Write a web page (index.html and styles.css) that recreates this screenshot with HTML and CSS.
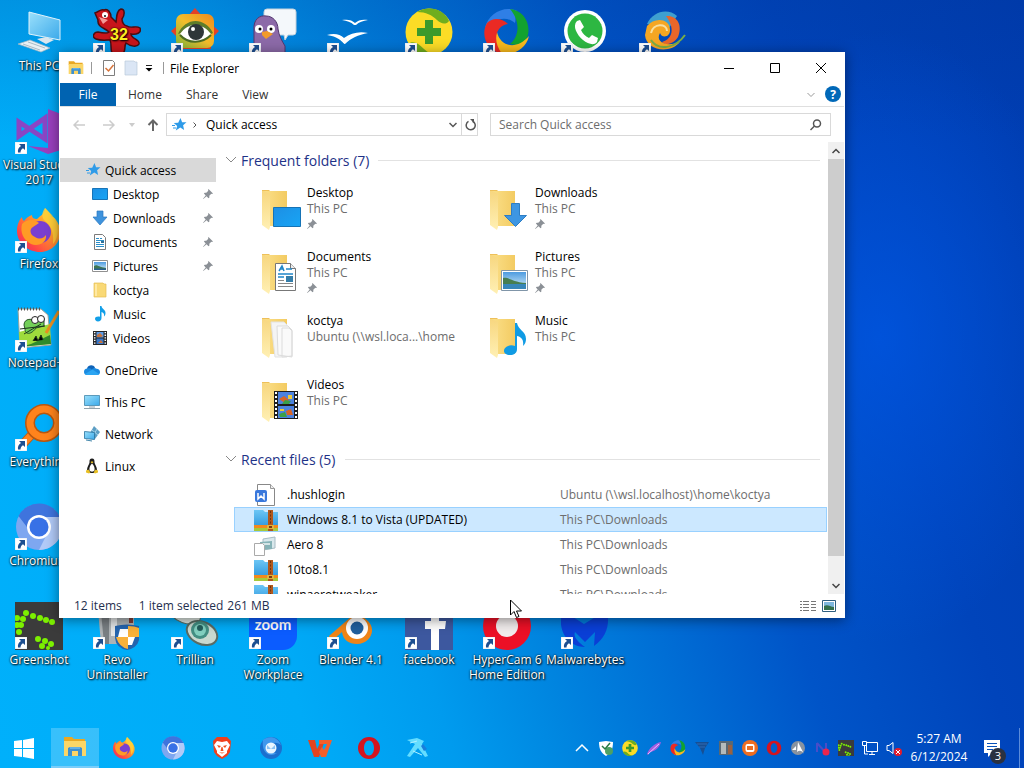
FILE: index.html
```
<!DOCTYPE html>
<html lang="en">
<head>
  <meta charset="UTF-8" />
  <meta name="viewport" content="width=device-width, initial-scale=1.0" />
  <title>File Explorer</title>
  <link rel="stylesheet" href="styles.css">
</head>
<body>
  <!-- shared icons -->
  <svg class="sprite" aria-hidden="true">
    <defs>
      <linearGradient id="g-folder" x1="0" x2="1"><stop offset="0" stop-color="#fbe08a"/><stop offset="1" stop-color="#f3cb62"/></linearGradient>
      <linearGradient id="g-flap" x1="0" x2="0" y1="0" y2="1"><stop offset="0" stop-color="#f7d67e"/><stop offset="1" stop-color="#fff0b4"/></linearGradient>
      <linearGradient id="g-screen" x1="0" x2="1" y1="0" y2="1"><stop offset="0" stop-color="#9be0fb"/><stop offset="1" stop-color="#3ba9ea"/></linearGradient>
      <linearGradient id="g-desk" x1="0" x2="1" y1="0" y2="1"><stop offset="0" stop-color="#1d8fe4"/><stop offset="1" stop-color="#18a5f5"/></linearGradient>
      <linearGradient id="g-fox" x1="1" x2="0" y1="0" y2="1"><stop offset="0" stop-color="#fff04a"/><stop offset=".4" stop-color="#ff9a2a"/><stop offset=".75" stop-color="#ff4545"/><stop offset="1" stop-color="#e3207a"/></linearGradient>
      <linearGradient id="g-sky" x1="0" x2="0" y1="0" y2="1"><stop offset="0" stop-color="#4d9be0"/><stop offset="1" stop-color="#d9f0fa"/></linearGradient>
      <linearGradient id="g-zip" x1="0" x2="0" y1="0" y2="1"><stop offset="0" stop-color="#6cc6f5"/><stop offset="1" stop-color="#2c95dc"/></linearGradient>
      <linearGradient id="g-eye" x1="0" x2="1" y1="1" y2="0"><stop offset="0" stop-color="#79b53a"/><stop offset=".5" stop-color="#f3bd2b"/><stop offset="1" stop-color="#ef8a1d"/></linearGradient>
    </defs>
    <symbol id="arrow" viewBox="0 0 12 12">
      <path fill="#fff" stroke="#c8d4e0" stroke-width=".5" d="M0 0h12v12H0z"/>
      <path fill="#1d4f91" d="M4 2h6v6L8 6.200C6.500 7 5.500 8.500 5.500 10.500H3C2.500 7.500 3.500 5.500 6 4z"/>
    </symbol>
    <symbol id="star" viewBox="0 0 16 16">
      <path fill="#2f9be8" d="M9.500 1l1.600 4.200 4.400.1-3.400 2.900 1 4.800-3.800-2.500-4.500 3 1.400-4.600L2.800 6l4.400-.3z"/>
      <path stroke="#2f9be8" d="M1 8.500h3M2 11h3"/>
    </symbol>
    <symbol id="desktop" viewBox="0 0 16 16"><path fill="url(#g-desk)" stroke="#1874b8" d="M.5 2.500h15v11H.5z"/></symbol>
    <symbol id="download" viewBox="0 0 16 16"><path fill="#3e93dd" stroke="#2b78c0" stroke-width=".7" d="M5 1h6v6h4l-7 8-7-8h4z"/></symbol>
    <symbol id="document" viewBox="0 0 16 16">
      <path fill="#fff" stroke="#7b7b7b" d="M2.500.5h8l3 3v12h-11z"/>
      <path stroke="#2c8fc9" d="M4 4.500h3M8 4.500h2M4 6.500h8M4 8.500h4M4 10.500h8M4 12.500h8"/>
      <path fill="#2f6f96" d="M9 7h3v2H9z"/>
    </symbol>
    <symbol id="picture" viewBox="0 0 16 16">
      <path fill="#fff" stroke="#909090" d="M.5 2.500h15v11H.5z"/>
      <path fill="url(#g-sky)" d="M2 4h12v8H2z"/>
      <path fill="#3f7652" d="M2 8c3-2 4 1 12 2v1H2z"/><path fill="#285f8c" d="M2 10.500h12V12H2z"/>
    </symbol>
    <symbol id="folder" viewBox="0 0 16 16"><path fill="#f9d976" stroke="#e5bd55" stroke-width=".7" d="M2 1h9l1 1h2v13H2z"/><path fill="#ffe9a3" d="M3 2h2v12H3z"/></symbol>
    <symbol id="music" viewBox="0 0 16 16"><path fill="#129fe8" d="M8 0h1.500c0 3 4 3.500 4 7 0 1.500-.5 2.500-1.500 3.500.5-3-1-4-2.500-4.500v6c0 2-1.500 3.500-3.500 3.500S3 14 3 12.800C3 11 5.500 10 8 10.800z"/></symbol>
    <symbol id="video" viewBox="0 0 16 16">
      <path fill="#262626" d="M1 1h14v14H1z"/>
      <path fill="#5b9be6" d="M4.500 2h7v5.500h-7z"/><path fill="#3575c8" d="M4.500 8.500h7V14h-7z"/>
      <path fill="#c8743c" d="M5 5l3-2 3 3-2 1H5zM6 13l3-3 2 3z"/>
      <path stroke="#fff" stroke-width="1.500" stroke-dasharray="1.300 1.300" d="M2.700 2v12.500M13.300 2v12.500"/>
    </symbol>
    <symbol id="cloud" viewBox="0 0 16 16">
      <path fill="#0f63b8" d="M3 6.500C4 3 9 2 11 5.500l-4 5z"/>
      <path fill="#1b8ae0" d="M3.500 6.500C1 6.500 0 8 0 10c0 2 1.300 3 3 3h10c2 0 3-1.200 3-3s-1.300-3.300-3.500-3.300c-2-1.500-4 0-4.500 1C7 6.500 5 6 3.500 6.500z"/>
      <path fill="#2ba5f2" d="M1 12l7.500-4.500L15 12c-.5.700-1 1-2 1H3c-.9 0-1.500-.4-2-1z"/>
    </symbol>
    <symbol id="pc" viewBox="0 0 16 16"><path fill="url(#g-screen)" stroke="#4286ab" stroke-width=".8" d="M.5 1.500h15v10H.5z"/><path stroke="#768b98" d="M0 14.500h16M5 13h6" stroke-width=".8"/></symbol>
    <symbol id="network" viewBox="0 0 16 16">
      <path fill="#5c9ec4" d="M10 0l6 6-5 7-5-6z"/><path d="M8 4l6 5M13 3l-4 7" stroke="#a6d4ea"/>
      <path fill="url(#g-screen)" stroke="#27719d" stroke-width=".8" d="M.5 5.500l10 1v7l-10-1z"/><path stroke="#4286ab" d="M2 14l6 1"/>
    </symbol>
    <symbol id="tux" viewBox="0 0 16 16">
      <path fill="#1c1c1c" d="M8 .5c-2 0-2.700 1.500-2.500 4C5.300 6.500 3 8.500 3 12l3 3h4l3-3c0-3.500-2.300-5.500-2.500-7.500C10.700 2 10 .5 8 .5z"/>
      <path fill="#fff" d="M8 5.500C6 7 5 10 5.500 12.500c1 1.500 4 1.500 5 0C11 10 10 7 8 5.500z"/>
      <path fill="#e8bf24" d="M6.500 4L8 3.300 9.500 4 8 5.500zM2 12.500l2.500-1 2 3-1.500 1-3-1zM14 12.500l-2.500-1-2 3 1.500 1 3-1z"/>
    </symbol>
    <symbol id="pin" viewBox="0 0 10 10"><path fill="#8b9096" d="M5.500 0L10 4.500l-1 .5-.7-.2-2 2 .1 1.700-.9.700L3.600 7.300.3 9.900 0 9.700l2.700-3.300L.9 4.500l.8-.8 1.600.1 2-2L5 1z"/></symbol>
    <!-- open folder used by the large tiles -->
    <symbol id="bigfolder" viewBox="0 0 48 48">
      <path fill="url(#g-folder)" d="M8 6h24v35H12z"/>
      <path fill="url(#g-flap)" d="M7 5l8 4v33l-1 3-7-5z"/>
      <path fill="#eec05a" d="M7 5h8l-1 1H7z"/>
    </symbol>
    <symbol id="zip" viewBox="0 0 24 24">
      <path fill="url(#g-zip)" d="M0 2h9l2 2h13v16H0z"/>
      <path fill="#f28a1c" d="M0 17h24v3H0z"/><path fill="#a7c93a" d="M0 20h24v3H0z"/>
      <path fill="#b0571c" d="M14 2h5v21h-5z"/><path stroke="#6d3410" stroke-dasharray="2 1.500" d="M16.500 3v14"/>
      <path fill="#e0b43c" d="M13 17h7v4h-7z"/><path fill="#7a3a12" d="M15 18h3v2h-3z"/>
    </symbol>
    <symbol id="explorer" viewBox="0 0 24 24">
      <path fill="#e9a823" d="M1 2h8l2 2h11v3H1z"/><path fill="#fbd667" d="M1 6h22v15H1z"/>
      <path fill="#3d8fd0" d="M5 13l2-1h10l2 1v8h-4v-5H9v5H5z"/><path fill="#63b0e6" d="M7 12h10v2H7z"/>
    </symbol>
    <symbol id="firefox" viewBox="0 0 48 48">
      <path fill="url(#g-fox)" d="M30 2c3 3 5 5 7 9 2-1 7 6 8 12 2 13-8 23-20 23S2 37 2 25c0-6 2-11 5-14 0 2 1 3 2 4 2-3 5-5 8-6 0 3 2 4 5 4 3-3 8-5 8-11z"/>
      <circle cx="25" cy="26" r="11" fill="#7a3fd0"/>
      <path fill="#ff9b25" d="M7 18c5-5 12-5 17-1l-6 4c-4 2-3 8 2 10 5 3 9 1 11-2 1 8-8 12-15 9-8-4-11-12-9-20z"/>
      <path fill="#ffd23a" d="M30 2c3 4 8 6 11 14 3 8 2 16-3 22 1-10-1-18-8-23-4-4-3-9 0-13z" opacity=".8"/>
    </symbol>
    <symbol id="chromium" viewBox="0 0 48 48">
      <circle cx="24" cy="24" r="23" fill="#7ea7f0"/>
      <path fill="#3f74dd" d="M3.500 13A23 23 0 0 1 45 14H24a10 10 0 0 0-9 14z"/>
      <path fill="#b1caf8" d="M45 14A23 23 0 0 1 24 47l9-18a10 10 0 0 0-3-15z"/>
      <circle cx="24" cy="24" r="12" fill="#fff"/><circle cx="24" cy="24" r="9.500" fill="#3871e6"/>
    </symbol>
    <symbol id="swirl" viewBox="0 0 48 48">
      <path fill="#2f7fe6" d="M2 20C5 6 21-3 34 3c-2 3-1 9-2 12C24 8 12 10 2 20z"/>
      <path fill="#12a22f" d="M27 1c14 1 22 16 17 29-3 6-10 8-17 6 9-7 11-22 0-35z"/>
      <path fill="#f8b91c" d="M46 28c-3 14-19 22-32 16-4-3-5-12 0-20 3 14 19 19 32 4z"/>
      <path fill="#ea2a24" d="M19 46C4 43-3 27 4 15c6-6 15-5 21 1-11 1-17 15-6 30z"/>
    </symbol>
    <symbol id="opera" viewBox="0 0 24 24"><path fill="#d4141f" fill-rule="evenodd" d="M12 1a11 11 0 1 0 0 22 11 11 0 0 0 0-22zm0 3.500c3 0 5 3.300 5 7.500s-2 7.500-5 7.500S7 16.200 7 12s2-7.500 5-7.500z"/></symbol>
    <symbol id="plus360" viewBox="0 0 48 48">
      <circle cx="24" cy="24" r="23.500" fill="#fbdc26"/>
      <path fill="#6fae1e" d="M12 4c12-7 27-3 32 9-3 4-8 3-12-1-5-5-11-8-20-8zM3 36c5-4 10-1 16 5 4 4 8 5 12 5-10 5-23 1-28-10z"/>
      <path fill="#3b9a2b" d="M20 12h8v8h8v8h-8v8h-8v-8h-8v-8h8z"/>
    </symbol>
    <symbol id="greenshot" viewBox="0 0 48 48">
      <path fill="#3b3b3b" d="M0 0h48v48H0z"/>
      <g fill="#7cf000"><circle cx="11" cy="11" r="3"/><circle cx="18" cy="14" r="3"/><circle cx="25" cy="16" r="3"/><circle cx="31" cy="18" r="3"/><circle cx="37" cy="20" r="3"/><circle cx="8" cy="17" r="3"/><circle cx="6" cy="23" r="3"/><circle cx="4" cy="30" r="3"/><circle cx="2" cy="16" r="3"/><circle cx="2" cy="23" r="3"/><circle cx="23" cy="37" r="3"/><circle cx="30" cy="39" r="3"/><circle cx="36" cy="42" r="3"/><circle cx="27" cy="44" r="3"/><circle cx="33" cy="46" r="2"/></g>
    </symbol>
  </svg>

  <main class="desktop">
    <a class="shortcut" href="#"><svg class="shortcut-icon" viewBox="0 0 48 48">
      <path fill="url(#g-screen)" stroke="#dff2fb" d="M14 4l31 8v20l-31-6z"/><path fill="#d9e6ee" d="M22 31l9-2 8 3-8 4z"/>
      <path fill="#e8f0f4" stroke="#9db4c1" stroke-width=".7" d="M3 36l12-4 20 8-9 4z"/><path stroke="#a9bcc7" d="M8 36l17 6M13 34l17 6"/></svg>This PC</a>
    <a class="shortcut" href="#" aria-label="IrfanView"><svg class="shortcut-icon" viewBox="0 0 48 48">
      <path fill="#c8151b" stroke="#4a0d10" stroke-width="1.500" d="M2 5c4-1 5-4 9-3 4-2 7 3 7 7l5 5c1-5 0-11 5-13 4 0 4 6 1 10 0 3 2 7 5 7 4 3 9-1 13 2 2 5-4 7-9 6 0 5 9 5 8 10-2 4-9 2-13-1-2 3 0 8-3 10H19c-2-5 0-9-2-13-4 0-9 1-14-1-5-2-2-7 2-7 4 1 9 2 11 0-4-4-12-5-11-12z"/>
      <circle cx="12" cy="7" r="3" fill="#fff"/><circle cx="12" cy="8" r="1" fill="#111"/><path fill="#f39a96" d="M6 9l9 3-5 4z"/>
      <text class="cat-number" x="26" y="32" text-anchor="middle">32</text></svg><svg class="badge"><use href="#arrow"/></svg></a>
    <a class="shortcut" href="#" aria-label="FastStone"><svg class="shortcut-icon" viewBox="0 0 48 48">
      <path fill="#e34228" d="M24 0l8 9h8v7l8 7-8 8v10H8V31l-8-8 8-7V8h9z"/><rect x="5" y="6" width="38" height="34" rx="7" fill="url(#g-eye)"/>
      <path fill="#5e7d2a" d="M7 26C14 10 33 8 42 25l-4 2c-9-10-20-12-28-2z"/><path fill="#fff" d="M9 26c8-12 22-12 31 0-8 9-22 10-31 0z"/>
      <circle cx="25" cy="24" r="8" fill="#2e3638"/><circle cx="22" cy="21" r="2" fill="#fff"/><path fill="none" stroke="#4b6b24" stroke-width="2" d="M9 27c8 9 22 9 31 0"/></svg><svg class="badge"><use href="#arrow"/></svg></a>
    <a class="shortcut" href="#" aria-label="Pidgin"><svg class="shortcut-icon" viewBox="0 0 48 48">
      <path fill="#f4f8fb" stroke="#c4d2dc" d="M18 1h26q3 0 3 3v20q0 3-3 3h-5l-3 5-1-5H18q-3 0-3-3V4q0-3 3-3z"/>
      <path fill="#8c6aa8" stroke="#54376f" d="M5 46V22C4 11 11 7 17 8c7 0 12 6 12 13 1 7 4 12 7 17v8z"/>
      <circle cx="10" cy="21" r="4" fill="#fff"/><circle cx="22" cy="21" r="4" fill="#fff"/><circle cx="11" cy="21" r="1.500"/><circle cx="22" cy="21" r="1.500"/>
      <path fill="#f19a2a" d="M13 24l5-1 6 3-7 5-4-4z"/></svg><svg class="badge"><use href="#arrow"/></svg></a>
    <a class="shortcut" href="#" aria-label="OpenOffice"><svg class="shortcut-icon" viewBox="0 0 48 48">
      <path fill="#fff" d="M15 12c6-1 10 0 13 3 3-3 8-4 13-3-5 1-9 2-12 5h-2c-3-3-7-4-12-5zM0 27c7-2 13-1 17 3 7-5 15-7 24-5-10 2-17 5-23 11-2 0-4-7-18-9z"/></svg><svg class="badge"><use href="#arrow"/></svg></a>
    <a class="shortcut" href="#" aria-label="360 Security"><svg class="shortcut-icon"><use href="#plus360"/></svg><svg class="badge"><use href="#arrow"/></svg></a>
    <a class="shortcut" href="#" aria-label="PDF Tools"><svg class="shortcut-icon"><use href="#swirl"/></svg><svg class="badge"><use href="#arrow"/></svg></a>
    <a class="shortcut" href="#" aria-label="WhatsApp"><svg class="shortcut-icon" viewBox="0 0 48 48">
      <circle cx="24" cy="23" r="21" fill="#fff"/><circle cx="24" cy="23" r="17.500" fill="#2db742"/>
      <path fill="#fff" d="M16 13l3-1 4 7-3 3c2 4 4 6 8 8l3-3 6 3-1 4c-3 4-9 2-14-2-6-5-11-14-6-19z"/></svg><svg class="badge"><use href="#arrow"/></svg></a>
    <a class="shortcut" href="#" aria-label="Paint"><svg class="shortcut-icon" viewBox="0 0 48 48">
      <path fill="#3e9fd0" d="M8 16C14 3 29 0 38 8l-8 12z"/><path fill="#e8662a" d="M27 8c11-1 17 9 12 21-4 7-13 9-16 5 11-3 13-14 4-26z"/><path fill="#f5a623" d="M8 18c7-9 22-8 23 3 1 8-8 10-10 4-5 8 5 15 20 9C30 47 7 42 6 27z"/><path fill="none" stroke="#79ad45" stroke-width="2" d="M12 32c7 11 24 9 34-5"/><path fill="none" stroke="#f8df9f" stroke-width="2" d="M12 25c2-10 16-10 16-2"/></svg><svg class="badge"><use href="#arrow"/></svg></a>

    <a class="shortcut first" href="#"><svg class="shortcut-icon" viewBox="0 0 48 48">
      <path fill="none" stroke="#8a45c4" stroke-width="5" d="M4 15v14l26-18v21L4 15z"/><path fill="#9a3fbe" d="M33 2l13 5v36l-13 4L13 39l20 2z"/></svg><svg class="badge"><use href="#arrow"/></svg>Visual Studio 2017</a>
    <a class="shortcut first" href="#"><svg class="shortcut-icon"><use href="#firefox"/></svg><svg class="badge"><use href="#arrow"/></svg>Firefox</a>
    <a class="shortcut first" href="#"><svg class="shortcut-icon" viewBox="0 0 48 48">
      <path fill="#fff" stroke="#9aa39a" d="M3 4h23l7 6 3 30-31 3z"/><path fill="#9edb3c" d="M4 27l31-8 1 20-31 3z"/><path fill="#2f8b2c" d="M16 39l19-9 1 9-31 3z"/>
      <path stroke="#555" stroke-dasharray="1 2" stroke-width="3" d="M3 4h23"/><path fill="#72cf58" stroke="#28542a" d="M9 20c0-7 9-7 12-3l8-3v7l-8 2c-5 7-11 7-11 1z"/>
      <circle cx="20" cy="15" r="3.500" fill="#fff" stroke="#222"/><circle cx="26" cy="14" r="3.500" fill="#fff" stroke="#222"/><path stroke="#1c331c" d="M5 24l25-3M9 29l17-10M18 36l3-5 2 5 3-6 2 5"/><path stroke="#e89020" stroke-width="3" d="M31 28L44 6"/></svg><svg class="badge"><use href="#arrow"/></svg>Notepad++</a>
    <a class="shortcut first" href="#"><svg class="shortcut-icon" viewBox="0 0 48 48">
      <path stroke="#be5b12" stroke-width="9" d="M8 40l13-14"/><path stroke="#ff831c" stroke-width="7" d="M8 40l13-14"/><circle cx="29" cy="19" r="14" fill="none" stroke="#b85710" stroke-width="10"/><circle cx="29" cy="19" r="14" fill="none" stroke="#ff831c" stroke-width="7"/></svg><svg class="badge"><use href="#arrow"/></svg>Everything</a>
    <a class="shortcut first" href="#"><svg class="shortcut-icon"><use href="#chromium"/></svg><svg class="badge"><use href="#arrow"/></svg>Chromium</a>
    <a class="shortcut first" href="#"><svg class="shortcut-icon"><use href="#greenshot"/></svg><svg class="badge"><use href="#arrow"/></svg>Greenshot</a>
    <a class="shortcut" href="#"><svg class="shortcut-icon" viewBox="0 0 48 48">
      <path fill="#aeb3b6" d="M5 8h36v34H8z"/><path fill="#797f83" d="M8 10h8v32h-5z"/><path fill="#e3e5e6" d="M18 10h6v24h-6z"/><path fill="#7d3d38" d="M36 12h4v9h-4z"/>
      <path fill="#2464ae" d="M22 24q12-3 24 0v14q-2 8-12 10-11-2-12-12z"/><path fill="#fff" d="M27 27h8v8H25zM35 35h7l-3 8h-4z"/><path fill="#f9b13a" d="M35 24q7 0 11 2v9H35zM23 35h12v12q-9-2-12-12z"/></svg><svg class="badge"><use href="#arrow"/></svg>Revo Uninstaller</a>
    <a class="shortcut" href="#"><svg class="shortcut-icon" viewBox="0 0 48 48">
      <ellipse cx="14" cy="12" rx="16" ry="9" fill="#dce4de" stroke="#586d64" transform="rotate(20 14 12)"/><ellipse cx="31" cy="31" rx="16" ry="11" fill="#c9d9d0" stroke="#596b63" stroke-width="2" transform="rotate(25 31 31)"/><circle cx="29" cy="28" r="9" fill="#438f83"/><circle cx="29" cy="28" r="6" fill="#82d0c0"/><circle cx="29" cy="26" r="3" fill="#225e5c"/></svg><svg class="badge"><use href="#arrow"/></svg>Trillian</a>
    <a class="shortcut" href="#"><svg class="shortcut-icon" viewBox="0 0 48 48">
      <rect width="48" height="48" rx="14" fill="#0b5cff"/><text class="zoom-word" x="24" y="28" text-anchor="middle">zoom</text></svg><svg class="badge"><use href="#arrow"/></svg>Zoom Workplace</a>
    <a class="shortcut" href="#"><svg class="shortcut-icon" viewBox="0 0 48 48">
      <path fill="#ef8418" d="M2 34L25 14 20 9l5-3 16 13c9 9 2 23-11 23-8 0-14-4-15-12L4 40z"/><circle cx="30" cy="26" r="11" fill="#fff"/><circle cx="30" cy="26" r="6.500" fill="#205f9d"/></svg><svg class="badge"><use href="#arrow"/></svg>Blender 4.1</a>
    <a class="shortcut" href="#"><svg class="shortcut-icon" viewBox="0 0 48 48">
      <path fill="#3d589f" d="M0 0h48v48H0z"/><path fill="#fff" d="M26 48V27h-6v-8h6v-6c0-6 4-9 9-9h6v8h-4q-3 0-3 3v4h7l-1 8h-6v21z"/></svg><svg class="badge"><use href="#arrow"/></svg>facebook</a>
    <a class="shortcut" href="#"><svg class="shortcut-icon" viewBox="0 0 48 48">
      <circle cx="24" cy="24" r="24" fill="#ec1026"/><circle cx="24" cy="24" r="11" fill="#f1ecec"/></svg><svg class="badge"><use href="#arrow"/></svg><span class="wide-label">HyperCam 6 Home Edition</span></a>
    <a class="shortcut" href="#"><svg class="shortcut-icon" viewBox="0 0 48 48">
      <path fill="#0a3fd6" d="M1 8l22 14L46 8c3 14 0 27-13 36l1-14-10 10-10-10c-2 5 3 10 10 15C6 45-4 28 1 8z"/></svg><svg class="badge"><use href="#arrow"/></svg>Malwarebytes</a>
  </main>

  <section class="window">
    <header class="title-bar">
      <svg class="icon"><use href="#explorer"/></svg>
      <span class="separator"></span>
      <button class="quick" aria-label="Properties"><svg class="icon" viewBox="0 0 16 16"><path fill="#fff" stroke="#7e7e7e" d="M2.500.5h9l2 2v13h-11z"/><path fill="none" stroke="#d8743a" stroke-width="1.500" d="M4.500 8l3 3 5-6"/></svg></button>
      <button class="quick" aria-label="New folder"><svg class="icon" viewBox="0 0 16 16"><path fill="#dbe6f5" stroke="#b9c8da" stroke-width=".7" d="M2 1h9l1 1h2v13H2z"/></svg></button>
      <button class="quick customize" aria-label="Customize"><svg width="8" height="8" viewBox="0 0 8 8"><path stroke="#222" d="M1 1.500h6"/><path d="M.5 4h7L4 7.500z"/></svg></button>
      <span class="separator"></span>
      <h1 class="title">File Explorer</h1>
      <button class="control" aria-label="Minimize"><svg width="10" height="10"><path stroke="#000" d="M0 5.500h10"/></svg></button>
      <button class="control" aria-label="Maximize"><svg width="10" height="10"><path fill="none" stroke="#000" d="M.5.5h9v9h-9z"/></svg></button>
      <button class="control" aria-label="Close"><svg width="10" height="10"><path stroke="#000" d="M0 0l10 10M10 0L0 10"/></svg></button>
    </header>

    <nav class="ribbon">
      <button class="tab file-tab">File</button>
      <button class="tab">Home</button>
      <button class="tab">Share</button>
      <button class="tab">View</button>
      <button class="expand" aria-label="Expand the ribbon"><svg width="8" height="6"><path fill="none" stroke="#999" d="M.5 1L4 4.500 7.500 1"/></svg></button>
      <button class="help" aria-label="Help">?</button>
    </nav>

    <div class="address-row">
      <button class="arrow-btn" aria-label="Back"><svg width="12" height="12"><path fill="none" stroke="#ccc" stroke-width="1.500" d="M12 6H1M5.500 1.500L1 6l4.500 4.500"/></svg></button>
      <button class="arrow-btn" aria-label="Forward"><svg width="12" height="12"><path fill="none" stroke="#ccc" stroke-width="1.500" d="M0 6h11M6.500 1.500L11 6l-4.500 4.500"/></svg></button>
      <button class="arrow-btn recent-btn" aria-label="Recent locations"><svg width="6" height="4"><path fill="#ccc" d="M0 0h6L3 4z"/></svg></button>
      <button class="arrow-btn up-btn" aria-label="Up"><svg width="12" height="12"><path fill="none" stroke="#666" stroke-width="2" d="M6 12V1.500M1.500 6L6 1.500 10.500 6"/></svg></button>
      <div class="address">
        <svg class="icon"><use href="#star"/></svg>
        <svg class="crumb" width="4" height="6"><path fill="none" stroke="#555" d="M.5.5L3 3 .5 5.500"/></svg>
        <a class="path" href="#">Quick access</a>
        <button class="address-btn" aria-label="Previous locations"><svg width="8" height="6"><path fill="none" stroke="#555" stroke-width="1.500" d="M.5 1L4 4.500 7.500 1"/></svg></button>
        <button class="address-btn refresh" aria-label="Refresh"><svg width="12" height="12"><path fill="none" stroke="#555" stroke-width="1.500" d="M8.500 2.200a4.500 4.500 0 1 1-4 .2"/><path fill="#555" d="M6 0h4v4z"/></svg></button>
      </div>
      <form class="search">
        <input type="search" placeholder="Search Quick access" aria-label="Search Quick access">
        <svg width="12" height="12"><circle cx="7" cy="4.500" r="3.500" fill="none" stroke="#555" stroke-width="1.500"/><path stroke="#555" stroke-width="1.500" d="M4.500 7L.5 11"/></svg>
      </form>
    </div>

    <div class="body">
      <nav class="tree">
        <a class="node current" href="#"><svg class="icon"><use href="#star"/></svg>Quick access</a>
        <a class="node child" href="#"><svg class="icon"><use href="#desktop"/></svg>Desktop<svg class="pin"><use href="#pin"/></svg></a>
        <a class="node child" href="#"><svg class="icon"><use href="#download"/></svg>Downloads<svg class="pin"><use href="#pin"/></svg></a>
        <a class="node child" href="#"><svg class="icon"><use href="#document"/></svg>Documents<svg class="pin"><use href="#pin"/></svg></a>
        <a class="node child" href="#"><svg class="icon"><use href="#picture"/></svg>Pictures<svg class="pin"><use href="#pin"/></svg></a>
        <a class="node child" href="#"><svg class="icon"><use href="#folder"/></svg>koctya</a>
        <a class="node child" href="#"><svg class="icon"><use href="#music"/></svg>Music</a>
        <a class="node child" href="#"><svg class="icon"><use href="#video"/></svg>Videos</a>
        <a class="node root" href="#"><svg class="icon"><use href="#cloud"/></svg>OneDrive</a>
        <a class="node root" href="#"><svg class="icon"><use href="#pc"/></svg>This PC</a>
        <a class="node root" href="#"><svg class="icon"><use href="#network"/></svg>Network</a>
        <a class="node root" href="#"><svg class="icon"><use href="#tux"/></svg>Linux</a>
      </nav>

      <div class="content">
        <h2 class="group"><svg width="12" height="8"><path fill="none" stroke="#888" d="M1 1l5 5 5-5"/></svg>Frequent folders (7)</h2>
        <div class="tiles">
          <a class="tile" href="#"><svg class="tile-icon" viewBox="0 0 48 48"><use href="#bigfolder"/><path fill="url(#g-desk)" stroke="#1673b5" d="M18.500 22.500h27v19h-27z"/></svg>
            <span class="tile-text">Desktop<small>This PC</small><svg class="pin"><use href="#pin"/></svg></span></a>
          <a class="tile" href="#"><svg class="tile-icon" viewBox="0 0 48 48"><use href="#bigfolder"/><path fill="#3e96e2" stroke="#2d7dc4" d="M28.500 18.500h8v12h7l-11 11-11-11h7z"/></svg>
            <span class="tile-text">Downloads<small>This PC</small><svg class="pin"><use href="#pin"/></svg></span></a>
          <a class="tile" href="#"><svg class="tile-icon" viewBox="0 0 48 48"><use href="#bigfolder"/><path fill="#fff" stroke="#777" d="M20.500 14.500h15l5 5v22h-20z"/><path fill="#eee" stroke="#777" d="M35.500 14.500v5h5"/><path fill="none" stroke="#2187c9" stroke-width="1.500" d="M24 22l3-5 2 5M25 20h3M31 20h6M23 25h15M23 28h6"/><path stroke="#888" d="M23 31.500h6M23 34.500h15M23 37.500h15"/><path fill="#357eaa" d="M31 27h7v6h-7z"/></svg>
            <span class="tile-text">Documents<small>This PC</small><svg class="pin"><use href="#pin"/></svg></span></a>
          <a class="tile" href="#"><svg class="tile-icon" viewBox="0 0 48 48"><use href="#bigfolder"/><path fill="#fff" stroke="#8095a8" d="M18.500 21.500h26v20h-26z"/><path fill="url(#g-sky)" d="M20 23h23v17H20z"/><path fill="#477e51" d="M20 29c6-1 9 4 23 5v2H20z"/><path fill="#3786b9" d="M20 35h23v5H20z"/></svg>
            <span class="tile-text">Pictures<small>This PC</small><svg class="pin"><use href="#pin"/></svg></span></a>
          <a class="tile" href="#"><svg class="tile-icon" viewBox="0 0 48 48"><use href="#bigfolder"/><path fill="#f4f4f4" stroke="#e2e2e2" d="M16 9h13l3 3v32H20z"/><path fill="#fafafa" stroke="#dcdcdc" d="M22 13h11l4 4v27l-14-2zM27 15h7l3 3v25l-10 1z"/></svg>
            <span class="tile-text">koctya<small>Ubuntu (\\wsl.loca...\home</small></span></a>
          <a class="tile" href="#"><svg class="tile-icon" viewBox="0 0 48 48"><use href="#bigfolder"/><path fill="#109be4" d="M32 10h2c1 7 9 8 9 16 0 3-1 5-3 7 1-7-2-9-6-10v13c0 4-3 6-7 6s-6-2-6-4c0-4 5-7 11-5z"/></svg>
            <span class="tile-text">Music<small>This PC</small></span></a>
          <a class="tile" href="#"><svg class="tile-icon" viewBox="0 0 48 48"><use href="#bigfolder"/><path fill="#1e1e1e" d="M19 14h24v28H19z"/><path fill="#4c82df" d="M23 15h16v12H23zM23 29h16v12H23z"/><path fill="#d96526" d="M24 22l5-3 5 4-4 3zM31 34l5-2 2 6h-6z"/><path fill="#3ba048" d="M30 23l6 1-2 3h-7zM24 37l6-2 2 5h-7z"/><path fill="#efca36" d="M33 18h4v4h-4zM25 32h4v2h-4z"/><path stroke="#fff" stroke-width="2" stroke-dasharray="2 2" d="M21 15v27M41 15v27"/></svg>
            <span class="tile-text">Videos<small>This PC</small></span></a>
        </div>

        <h2 class="group"><svg width="12" height="8"><path fill="none" stroke="#888" d="M1 1l5 5 5-5"/></svg>Recent files (5)</h2>
        <table class="files">
          <tr><td class="file-icon"><svg viewBox="0 0 24 24"><path fill="#fff" stroke="#888" d="M3.500 1.500h13l4 4v17h-17z"/><path fill="#eee" stroke="#999" d="M16.500 1.500v4h4"/><rect x="1" y="7" width="12" height="12" rx="2" fill="#3978dc"/><path fill="none" stroke="#fff" stroke-width="1.500" d="M4 10v6l3-3 3 3v-6"/></svg></td><td class="file-name">.hushlogin</td><td>Ubuntu (\\wsl.localhost)\home\koctya</td></tr>
          <tr class="selected"><td class="file-icon"><svg><use href="#zip"/></svg></td><td class="file-name">Windows 8.1 to Vista (UPDATED)</td><td>This PC\Downloads</td></tr>
          <tr><td class="file-icon"><svg viewBox="0 0 24 24"><path fill="#d9e8ec" stroke="#a8bcc4" d="M9 6l12-2v11l-12 2z"/><path fill="#86b3b7" d="M6 9l12-1v8l-12 1z"/><path fill="#d3e4e6" d="M8 10h8v2H8z"/><path fill="#fff" stroke="#aaa" d="M.500 10.500h8l2 2v10h-10z"/></svg></td><td class="file-name">Aero 8</td><td>This PC\Downloads</td></tr>
          <tr><td class="file-icon"><svg><use href="#zip"/></svg></td><td class="file-name">10to8.1</td><td>This PC\Downloads</td></tr>
          <tr><td class="file-icon"><svg><use href="#zip"/></svg></td><td class="file-name">winaerotweaker</td><td>This PC\Downloads</td></tr>
        </table>
      </div>

      <div class="scrollbar">
        <button aria-label="Scroll up"><svg width="8" height="6"><path fill="none" stroke="#444" stroke-width="1.500" d="M.5 5L4 1.500 7.500 5"/></svg></button>
        <div class="track"><div class="thumb"></div></div>
        <button aria-label="Scroll down"><svg width="8" height="6"><path fill="none" stroke="#444" stroke-width="1.500" d="M.5 1L4 4.500 7.500 1"/></svg></button>
      </div>
    </div>

    <footer class="status">
      <span class="count">12 items</span>
      <span>1 item selected</span>
      <span>261 MB</span>
      <button class="view-btn first-view" aria-label="Details view"><svg width="16" height="12"><path stroke="#777" stroke-dasharray="2 1 6" d="M0 1.500h9M0 4.500h9M0 7.500h9M0 10.500h9"/><path stroke="#777" d="M11 1.500h5M11 4.500h5M11 7.500h5M11 10.500h5"/></svg></button>
      <button class="view-btn" aria-label="Large icons view"><svg width="14" height="12"><path fill="#fff" stroke="#2f5f80" d="M.5.5h13v11H.5z"/><path fill="#7fb8de" d="M2 2h10v5H2z"/><path fill="#33704c" d="M2 6c4-2 6 1 10 1v3H2z"/></svg></button>
    </footer>
  </section>

  <footer class="taskbar">
    <button class="task start" aria-label="Start"><svg viewBox="0 0 24 24"><path fill="#fff" d="M2 5l8-1v8H2zM11 4l11-2v10H11zM2 13h8v8l-8-1zM11 13h11v10l-11-2z"/></svg></button>
    <button class="task active" aria-label="File Explorer"><svg><use href="#explorer"/></svg></button>
    <button class="task" aria-label="Firefox"><svg><use href="#firefox"/></svg></button>
    <button class="task" aria-label="Chromium"><svg><use href="#chromium"/></svg></button>
    <button class="task" aria-label="Brave"><svg viewBox="0 0 24 24"><path fill="#f1401c" d="M7 1h10l4 4-1 11-3 4-5 3-5-3-3-4L3 5z"/><path fill="#fff" d="M7 5l5 1 5-1 3 4-3 6 0 2-5 4-5-4 0-2-3-6z"/><path fill="#f1501c" d="M7 9l4 1-2 2zM17 9l-4 1 2 2zM11.500 11h1l1 4h-3zM9 16.500h6l-3 1z"/></svg></button>
    <button class="task" aria-label="Thunderbird"><svg viewBox="0 0 24 24"><circle cx="12" cy="12" r="11" fill="#1b6fce"/><path fill="#4098ed" d="M4 4c6-5 15-3 18 5-4-3-8-3-11 0-3 4 2 9 7 8-7 5-16 0-14-13z"/><circle cx="12" cy="12" r="5.500" fill="#eaf5ff"/><path fill="#8bc2f5" d="M8 9l4 4 4-4v4H8z"/></svg></button>
    <button class="task" aria-label="WPS Office"><svg viewBox="0 0 24 24"><path fill="#e34420" d="M0 4h7l2 9 3-6h4l-5 14H6z"/><path fill="#f2602b" d="M11 4h13l-6 17h-5l-2-5 3-5 2 3 3-6h-8z"/></svg></button>
    <button class="task" aria-label="Opera"><svg><use href="#opera"/></svg></button>
    <button class="task" aria-label="Tweaker"><svg viewBox="0 0 24 24"><path fill="#64ddff" d="M1 4l10-2 7 3-2 3 6 12-3 1-7-9-8 9-3-1 8-12z"/><path fill="#197edb" d="M17 8l4 5-3 2-3-5z"/><path stroke="#b2f1ff" d="M7 15l9 4M4 7l7-2"/></svg></button>

    <div class="tray">
      <svg viewBox="0 0 16 16"><path fill="none" stroke="#fff" stroke-width="1.500" d="M2 11l6-6 6 6"/></svg>
      <svg viewBox="0 0 16 16"><path fill="#fff" d="M1 2l7-1 7 1c0 7-2 11-7 14C3 13 1 9 1 2z"/><circle cx="11" cy="11" r="4" fill="#4da163"/><path fill="none" stroke="#287a45" stroke-width="1.500" d="M4 6l3 3 5-6"/></svg>
      <svg><use href="#plus360"/></svg>
      <svg viewBox="0 0 16 16"><path fill="#a45ee0" d="M1 14C3 8 9 3 15 2c-1 5-5 9-11 10l-2 3z"/><path stroke="#ecc4ff" d="M2 14L13 4"/></svg>
      <svg><use href="#swirl"/></svg>
      <svg viewBox="0 0 16 16"><path fill="#174f93" d="M1 2h14l-4 6-2 7-3-7z"/><path stroke="#306ab4" d="M3 4h10M5 7h6"/></svg>
      <svg viewBox="0 0 16 16"><path fill="#596873" d="M1 1h14v14H1z"/><path fill="#b4bbbb" d="M3 3h5v11H3z"/><path fill="#9b6040" d="M10 5h4v9h-4z"/></svg>
      <svg viewBox="0 0 16 16"><circle cx="8" cy="8" r="8" fill="#ee6d20"/><rect x="3.500" y="4" width="9" height="8" rx="2" fill="#fff"/><path fill="#ee6d20" d="M5 6h6v4H5z"/></svg>
      <svg><use href="#opera"/></svg>
      <svg viewBox="0 0 16 16"><circle cx="8" cy="8" r="7" fill="#89939f"/><path fill="#fff" d="M8 2l6 12c-2-4-5-4-7-2zM2 10l4-4v4z"/></svg>
      <svg viewBox="0 0 16 16"><path stroke="#494dc8" stroke-width="2" d="M3 3v9M3 3l9 10M12 3v9"/><circle cx="12" cy="12" r="3.500" fill="#ea254d"/></svg>
      <svg><use href="#greenshot"/></svg>
      <svg viewBox="0 0 16 16"><path fill="none" stroke="#fff" d="M4.500 2.500h11v9h-11zM7 14.500h6M10 12v2M.5 1.500h4v4h-4zM2.500 6v8H6"/></svg>
      <svg viewBox="0 0 16 16"><path fill="none" stroke="#fff" d="M1 5.500h2l4-3v11l-4-3H1z"/><circle cx="12" cy="12" r="4" fill="#e51b2b"/><path stroke="#fff" d="M10 10l4 4M14 10l-4 4"/></svg>
    </div>
    <time class="clock">5:27 AM<br>6/12/2024</time>
    <button class="notifications" aria-label="Notifications"><svg width="18" height="18"><path fill="#fff" d="M0 1h16v13H8l-4 4v-4H0z"/><path stroke="#0750b8" d="M3 4.500h10M3 7.500h10M3 10.500h6"/></svg><span class="notice-count">3</span></button>
    <button class="show-desktop" aria-label="Show desktop"></button>
  </footer>

  <svg class="cursor" viewBox="0 0 12 19"><path fill="#fff" stroke="#000" d="M.5 1v15l3.500-3.500 2.500 6 2.500-1-2.500-5.500h5z"/></svg>
</body>
</html>
```
FILE: styles.css
```
* {
  box-sizing: border-box;
}
body {
  margin: 0;
  height: 100vh;
  position: relative;
  overflow: hidden;
  font-family: "Open Sans", "Noto Sans", sans-serif;
  font-size: 12px;
  color: #000;
  background:
    radial-gradient(ellipse 20% 40% at 86% 44%, rgba(0, 92, 238, 0.6), rgba(0, 92, 238, 0)),
    linear-gradient(180deg, rgba(0, 50, 140, 0.2), rgba(0, 50, 140, 0) 18%),
    linear-gradient(72deg, #00b0fb 0%, #00abf7 25%, #009bee 36%, #0086e0 45%, #006cd4 56%, #0054c8 66%, #0044bb 80%, #003cb0 100%);
}
button {
  display: flex;
  align-items: center;
  justify-content: center;
  border: 0;
  padding: 0;
  background: none;
  font: inherit;
  color: inherit;
}
a {
  color: inherit;
  text-decoration: none;
}
svg {
  flex: none;
}
.sprite {
  position: absolute;
  width: 0;
  height: 0;
}
.icon {
  width: 16px;
  height: 16px;
}
.pin {
  width: 10px;
  height: 10px;
}

/* desktop */
.desktop {
  display: grid;
  grid-template-columns: repeat(9, 78px);
  grid-auto-rows: 99px;
}
.shortcut {
  position: relative;
  display: block;
  padding-top: 58px;
  text-align: center;
  line-height: 15px;
  color: #fff;
  text-shadow: 1px 1px 2px #000, 0 0 2px #000;
}
.first {
  grid-column: 1;
}
.shortcut-icon {
  position: absolute;
  top: 8px;
  left: 15px;
  width: 48px;
  height: 48px;
}
.badge {
  position: absolute;
  top: 43px;
  left: 15px;
  width: 12px;
  height: 12px;
}
.wide-label {
  display: block;
  margin: 0 -4px;
}
.cat-number {
  font: bold 16px "Liberation Sans", sans-serif;
  fill: #ffef1f;
}
.zoom-word {
  font: bold 15px "Lato", sans-serif;
  fill: #fff;
  text-shadow: none;
}

/* explorer window */
.window {
  position: absolute;
  top: 52px;
  right: 179px;
  bottom: 150px;
  left: 59px;
  display: flex;
  flex-direction: column;
  background: #fff;
  border: 1px solid #fff;
  box-shadow: 0 2px 12px rgba(0, 0, 0, 0.45);
}
.title-bar {
  display: flex;
  align-items: center;
  height: 30px;
  padding-left: 8px;
}
.separator {
  width: 1px;
  height: 12px;
  margin: 0 6px 0 7px;
  background: #999;
}
.quick {
  width: 22px;
  height: 22px;
}
.customize {
  width: 14px;
}
.title {
  flex: 1;
  margin: 0;
  font-size: 12px;
  font-weight: normal;
}
.control {
  width: 46px;
  height: 30px;
}
.ribbon {
  display: flex;
  height: 24px;
  border-bottom: 1px solid #dfdfdf;
}
.tab {
  padding: 0 12px;
  color: #333;
}
.file-tab {
  width: 56px;
  background: #0063b1;
  color: #fff;
}
.expand {
  width: 16px;
  margin-left: auto;
}
.help {
  width: 16px;
  height: 16px;
  margin: 3px 3px 0 6px;
  border-radius: 50%;
  background: #0068b8;
  color: #fff;
  font-weight: bold;
}
.address-row {
  display: flex;
  align-items: center;
  height: 35px;
  padding: 0 13px 0 4px;
}
.arrow-btn {
  width: 30px;
  height: 22px;
}
.recent-btn {
  width: 16px;
}
.up-btn {
  width: 26px;
}
.address {
  flex: 18;
  display: flex;
  align-items: center;
  height: 23px;
  margin-right: 12px;
  padding-left: 4px;
  border: 1px solid #d9d9d9;
}
.crumb {
  margin: 0 9px 0 6px;
}
.path {
  flex: 1;
}
.address-btn {
  width: 16px;
  height: 21px;
}
.refresh {
  border-left: 1px solid #d9d9d9;
}
.search {
  flex: 19;
  display: flex;
  align-items: center;
  height: 23px;
  padding: 0 8px;
  border: 1px solid #d9d9d9;
}
.search input {
  flex: 1;
  min-width: 0;
  padding: 0;
  border: 0;
  outline: 0;
  background: none;
  font: inherit;
}
.search input::placeholder {
  color: #6d6d6d;
}

.body {
  flex: 1;
  min-height: 0;
  display: flex;
}
.tree {
  width: 156px;
  padding-top: 16px;
}
.node {
  display: flex;
  align-items: center;
  gap: 5px;
  height: 24px;
  padding-left: 24px;
}
.current {
  gap: 4px;
  padding-left: 25px;
  background: #d9d9d9;
}
.child {
  padding-left: 32px;
}
.root {
  margin-top: 8px;
}
.node .pin {
  margin: 0 3px 0 auto;
}
.content {
  flex: 1;
  min-width: 0;
  overflow: hidden;
  padding: 3px 0 0 9px;
}
.group {
  display: flex;
  align-items: center;
  height: 30px;
  margin: 0;
  padding-right: 8px;
  font-size: 14px;
  font-weight: normal;
  color: #1e3287;
}
.group svg {
  margin-right: 4px;
}
.group::after {
  content: "";
  flex: 1;
  height: 1px;
  margin-left: 9px;
  background: #e2e2e2;
}
.tiles {
  display: grid;
  grid-template-columns: repeat(auto-fill, 228px);
  grid-auto-rows: 64px;
  padding: 10px 0 3px 30px;
}
.tile {
  display: flex;
  gap: 4px;
}
.tile-icon {
  width: 48px;
  height: 48px;
}
.tile-text {
  line-height: 16px;
}
.tile-text small {
  display: block;
  font-size: 12px;
  color: #6d6d6d;
}
.tile-text .pin {
  display: block;
  margin-top: 2px;
}
.files {
  width: calc(100% - 10px);
  margin: 8px 1px 0 9px;
  table-layout: fixed;
  border-collapse: collapse;
}
.files tr {
  height: 25px;
}
.files td {
  padding: 0;
  color: #6d6d6d;
  white-space: nowrap;
}
.files .file-icon {
  width: 53px;
  padding-left: 20px;
}
.file-icon svg {
  display: block;
  width: 24px;
  height: 24px;
}
.files .file-name {
  width: 273px;
  color: #000;
}
.selected {
  background: #cce8ff;
  outline: 1px solid #99d1ff;
  outline-offset: -1px;
}
.scrollbar {
  width: 16px;
  display: flex;
  flex-direction: column;
  background: #f0f0f0;
}
.scrollbar button {
  width: 16px;
  height: 17px;
}
.track {
  flex: 1;
}
.thumb {
  height: 95%;
  background: #cdcdcd;
}
.status {
  display: flex;
  align-items: center;
  gap: 4px;
  height: 23px;
  padding: 0 8px 0 14px;
  color: #1f2f4f;
}
.count {
  margin-right: 13px;
}
.view-btn {
  height: 20px;
  margin-left: 2px;
}
.first-view {
  margin-left: auto;
}

/* taskbar */
.taskbar {
  position: absolute;
  right: 0;
  bottom: 0;
  left: 0;
  display: flex;
  align-items: center;
  gap: 1px;
  height: 40px;
  color: #fff;
}
.task {
  width: 48px;
  height: 40px;
}
.task svg {
  width: 24px;
  height: 24px;
}
.start {
  margin-right: 2px;
}
.active {
  background: rgba(255, 255, 255, 0.22);
  border-bottom: 2px solid #79cdfa;
}
.tray {
  display: flex;
  gap: 8px;
  margin-left: auto;
}
.tray svg {
  width: 16px;
  height: 16px;
}
.clock {
  width: 72px;
  text-align: center;
  line-height: 18px;
}
.notifications {
  position: relative;
  width: 42px;
  height: 40px;
  padding-right: 9px;
}
.notice-count {
  position: absolute;
  right: 12px;
  bottom: 4px;
  width: 16px;
  height: 16px;
  border-radius: 50%;
  background: #2a3140;
  font-size: 11px;
  line-height: 16px;
}
.show-desktop {
  width: 5px;
  height: 40px;
  border-left: 1px solid #5c8cda;
}
.cursor {
  position: absolute;
  top: 599px;
  left: 510px;
  width: 12px;
  height: 19px;
}
```
